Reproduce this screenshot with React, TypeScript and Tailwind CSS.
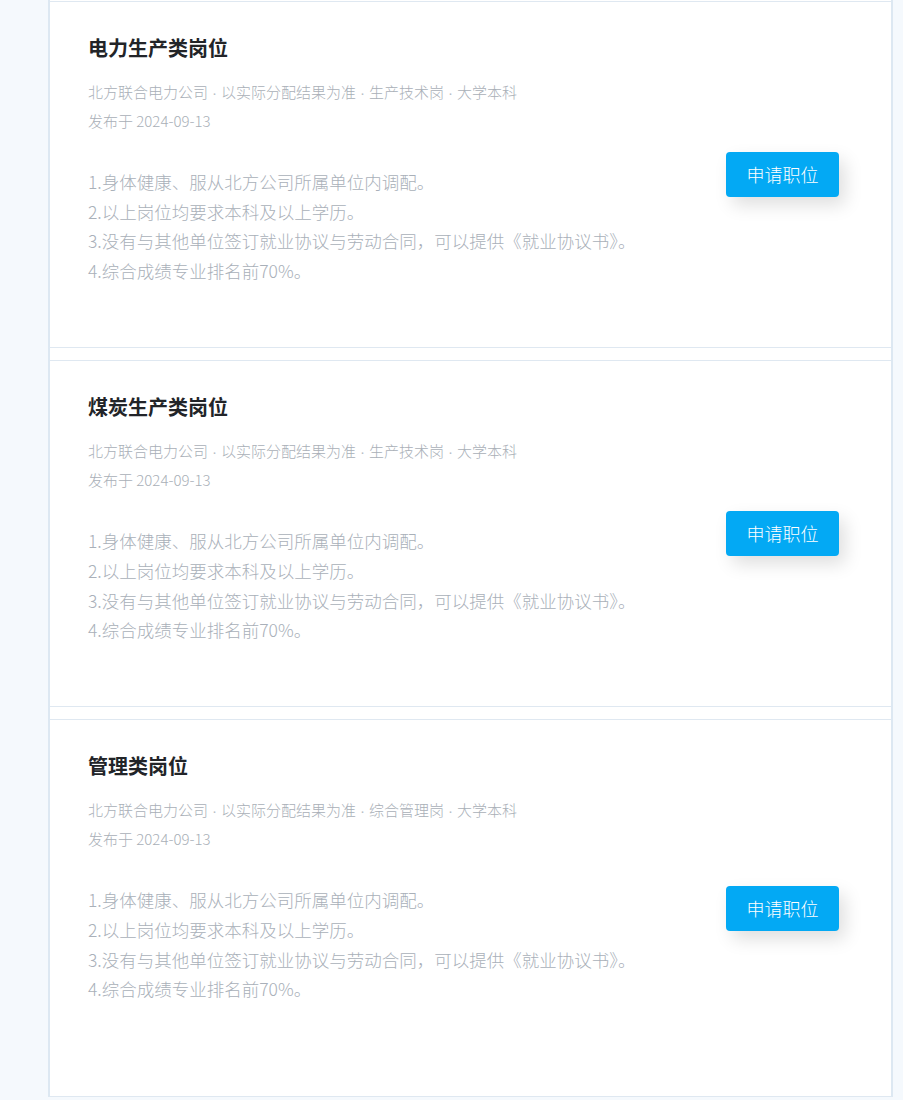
const jobs = [
  { title: '电力生产类岗位', dept: '生产技术岗', extra: false },
  { title: '煤炭生产类岗位', dept: '生产技术岗', extra: false },
  { title: '管理类岗位', dept: '综合管理岗', extra: true },
]

const requirements = [
  '1.身体健康、服从北方公司所属单位内调配。',
  '2.以上岗位均要求本科及以上学历。',
  '3.没有与其他单位签订就业协议与劳动合同，可以提供《就业协议书》。',
  '4.综合成绩专业排名前70%。',
]

const FONT = "font-['Noto_Sans_CJK_SC','Noto_Sans',sans-serif]"

export default function App() {
  return (
    <div className={`min-h-[1100px] bg-[#f5f9fd] ${FONT}`}>
      <div className="ml-12 w-[845px] pt-px border-x-2 border-[#dde8f2] bg-white flex flex-col gap-[12.5px]">
        {jobs.map(job => (
          <JobCard key={job.title} {...job} />
        ))}
      </div>
    </div>
  )
}

function Dot() {
  return <span className="font-['Liberation_Sans',sans-serif] leading-[0] px-[4px] text-[#b8bec5]">·</span>
}

function JobCard({ title, dept, extra }: { title: string; dept: string; extra: boolean }) {
  return (
    <div className="border-y border-[#dfe8f1] flex justify-between">
      <div className={`pl-[38px] pt-[32px] flex flex-col ${extra ? 'pb-[92px]' : 'pb-[61px]'}`}>
        <h3 className="text-[20px] leading-[28px] font-bold text-[#222428]">{title}</h3>
        <div className="mt-[15px] h-[29px] text-[15px] leading-[29px] font-light text-[#a9afb7]">
          北方联合电力公司<Dot />以实际分配结果为准<Dot />{dept}<Dot />大学本科
        </div>
        <div className="h-[29px] text-[15px] leading-[29px] font-light text-[#a9afb7]">发布于 2024-09-13</div>
        <div className="mt-[32px] flex flex-col text-[17.5px] leading-[29.67px] font-light text-[#a9b0b9]">
          {requirements.map(r => (
            <div key={r}>{r}</div>
          ))}
        </div>
      </div>
      <div className="pr-[52px] flex items-center">
        <button className="w-[113px] h-[45px] rounded-[4px] bg-[#03a9f4] text-white text-[18px] font-light shadow-[6px_8px_18px_rgba(0,0,0,0.13)]">
          申请职位
        </button>
      </div>
    </div>
  )
}
